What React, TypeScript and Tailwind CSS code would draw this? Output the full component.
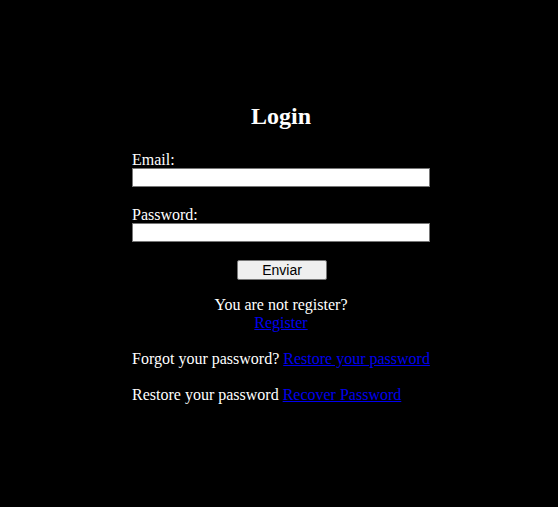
export default function App() {
  return (
    <div className="w-[558px] h-[507px] bg-black text-white font-['Liberation_Serif',serif] text-[16px] leading-[18px]">
      <div className="w-[298px] ml-[132px] pt-[102px] flex flex-col">
        <h2 className="text-[24px] font-bold leading-[28px] text-center">Login</h2>
        <label className="mt-[19px] block h-[19px] pt-[2px]">Email:</label>
        <input type="email" className="block w-[298px] h-[19px] bg-white border border-[#767676] text-black" />
        <label className="mt-[17px] block h-[19px] pt-[2px]">Password:</label>
        <input type="password" className="block w-[298px] h-[19px] bg-white border border-[#767676] text-black" />
        <div className="mt-[18px] flex justify-center">
          <button className="w-[90px] h-[20px] bg-[#efefef] border border-[#767676] rounded-[2px] text-black font-['Liberation_Sans',sans-serif] text-[14px] leading-[16px] ml-[2px]">Enviar</button>
        </div>
        <p className="mt-[16px] text-center">You are not register?</p>
        <p className="text-center"><a href="#" className="text-[#0000ee] underline">Register</a></p>
        <p className="mt-[18px] whitespace-nowrap">Forgot your password? <a href="#" className="text-[#0000ee] underline">Restore your password</a></p>
        <p className="mt-[18px] whitespace-nowrap">Restore your password <a href="#" className="text-[#0000ee] underline">Recover Password</a></p>
      </div>
    </div>
  );
}
